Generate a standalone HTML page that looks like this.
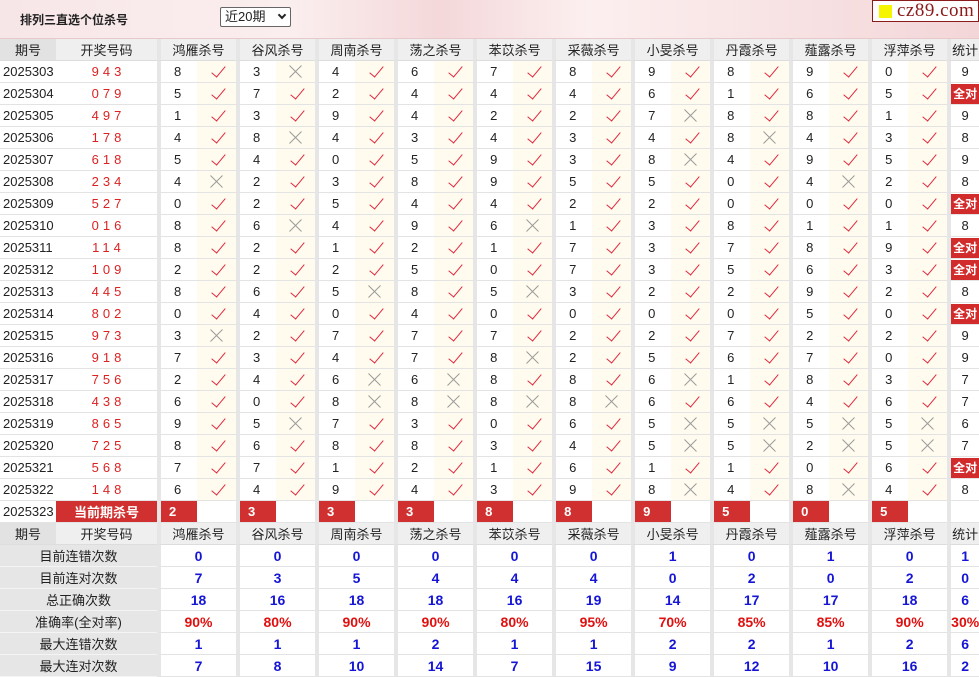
<!DOCTYPE html>
<html><head><meta charset="utf-8">
<style>
*{margin:0;padding:0;box-sizing:border-box}
body{width:979px;height:676px;overflow:hidden;background:#fff;font-family:"Liberation Sans","Noto Sans CJK SC",sans-serif;font-size:13px;color:#222}
.top{position:relative;height:39px;background:linear-gradient(90deg,#f7e6e8 0%,#fbeeee 30%,#f4d8da 45%,#fcefef 60%,#f3d6d8 100%);border-bottom:1px solid #e6c9cb}
.ttl{position:absolute;left:20px;top:11px;font-weight:bold;font-size:12px;color:#222}
.sel{position:absolute;left:220px;top:7px;width:71px;height:20px;border:1px solid #666;background:#fff;font-size:13px;padding-left:4px;line-height:18px;border-radius:2px}
.sel i{position:absolute;right:5px;top:4px;width:6px;height:6px;border-right:2px solid #222;border-bottom:2px solid #222;transform:rotate(45deg)}
.logo{position:absolute;left:872px;top:0;width:107px;height:22px;border:1px solid #8b1a1a;background:#fff;font-family:"Liberation Serif",serif;font-size:19px;color:#8b1a1a;line-height:20px;padding-left:24px;letter-spacing:0.5px}
.logo:before{content:"";position:absolute;left:6px;top:4px;width:13px;height:13px;background:#f5f500}
table{border-collapse:separate;border-spacing:0;table-layout:fixed;width:979px}
td{height:22px;border-bottom:1px solid #e3e3e3;text-align:center;white-space:nowrap;overflow:hidden;padding:0}
.p{text-align:left;padding-left:3px}
.d{color:#d22;letter-spacing:4px;padding-left:4px}
.n{border-left:4px solid #e6e6e6;text-align:left;padding-left:13px}
.y,.x{position:relative;background:#fffbef}
.y:after{content:"";position:absolute;left:18px;top:2px;width:6px;height:13px;border-right:1.6px solid #e2283c;border-bottom:1.6px solid #e2283c;transform:rotate(40deg)}
.x:before,.x:after{content:"";position:absolute;left:11px;top:10px;width:17px;height:1px;background:#9a9a9a;transform:rotate(45deg)}
.x:after{transform:rotate(-45deg)}
.t{border-left:4px solid #e6e6e6}
.q{display:inline-block;background:#d22b2b;color:#fff;font-weight:bold;width:28px;height:20px;line-height:20px;font-size:12px}
.h td{background:#efefef;border-bottom:1px solid #ddd}
.h td.g{border-left:4px solid #e6e6e6}
.h td.f{background:#e2e2e2}
.c td.r{background:#d0302f;color:#fff;font-weight:bold;text-align:left;padding-left:8px;border-left:4px solid #e6e6e6}
.c td.k{background:#d0302f;color:#fff;font-weight:bold}
.s td{background:#fff}
.s td.l{background:#e6e6e6;border-bottom:1px solid #f4f4f4}
.s td.v{border-left:4px solid #e6e6e6;color:#1515d6;font-weight:bold;font-size:14px}
.s td.rr{color:#e01010}
</style></head><body>
<div class="top"><div class="ttl">排列三直选个位杀号</div><div class="sel">近20期<i></i></div><div class="logo">cz89.com</div></div>
<table>
<colgroup><col style="width:56px"><col style="width:101px">
<col style="width:40px"><col style="width:39px"><col style="width:40px"><col style="width:39px"><col style="width:40px"><col style="width:39px"><col style="width:40px"><col style="width:39px"><col style="width:40px"><col style="width:39px"><col style="width:40px"><col style="width:39px"><col style="width:40px"><col style="width:39px"><col style="width:40px"><col style="width:39px"><col style="width:40px"><col style="width:39px"><col style="width:40px"><col style="width:39px">
<col style="width:32px"></colgroup>
<tr class="h"><td class="f">期号</td><td>开奖号码</td><td class="g" colspan="2">鸿雁杀号</td><td class="g" colspan="2">谷风杀号</td><td class="g" colspan="2">周南杀号</td><td class="g" colspan="2">荡之杀号</td><td class="g" colspan="2">苯苡杀号</td><td class="g" colspan="2">采薇杀号</td><td class="g" colspan="2">小旻杀号</td><td class="g" colspan="2">丹霞杀号</td><td class="g" colspan="2">薤露杀号</td><td class="g" colspan="2">浮萍杀号</td><td class="g">统计</td></tr>
<tr><td class="p">2025303</td><td class="d">943</td><td class="n">8</td><td class="y"></td><td class="n">3</td><td class="x"></td><td class="n">4</td><td class="y"></td><td class="n">6</td><td class="y"></td><td class="n">7</td><td class="y"></td><td class="n">8</td><td class="y"></td><td class="n">9</td><td class="y"></td><td class="n">8</td><td class="y"></td><td class="n">9</td><td class="y"></td><td class="n">0</td><td class="y"></td><td class="t">9</td></tr>
<tr><td class="p">2025304</td><td class="d">079</td><td class="n">5</td><td class="y"></td><td class="n">7</td><td class="y"></td><td class="n">2</td><td class="y"></td><td class="n">4</td><td class="y"></td><td class="n">4</td><td class="y"></td><td class="n">4</td><td class="y"></td><td class="n">6</td><td class="y"></td><td class="n">1</td><td class="y"></td><td class="n">6</td><td class="y"></td><td class="n">5</td><td class="y"></td><td class="t"><b class="q">全对</b></td></tr>
<tr><td class="p">2025305</td><td class="d">497</td><td class="n">1</td><td class="y"></td><td class="n">3</td><td class="y"></td><td class="n">9</td><td class="y"></td><td class="n">4</td><td class="y"></td><td class="n">2</td><td class="y"></td><td class="n">2</td><td class="y"></td><td class="n">7</td><td class="x"></td><td class="n">8</td><td class="y"></td><td class="n">8</td><td class="y"></td><td class="n">1</td><td class="y"></td><td class="t">9</td></tr>
<tr><td class="p">2025306</td><td class="d">178</td><td class="n">4</td><td class="y"></td><td class="n">8</td><td class="x"></td><td class="n">4</td><td class="y"></td><td class="n">3</td><td class="y"></td><td class="n">4</td><td class="y"></td><td class="n">3</td><td class="y"></td><td class="n">4</td><td class="y"></td><td class="n">8</td><td class="x"></td><td class="n">4</td><td class="y"></td><td class="n">3</td><td class="y"></td><td class="t">8</td></tr>
<tr><td class="p">2025307</td><td class="d">618</td><td class="n">5</td><td class="y"></td><td class="n">4</td><td class="y"></td><td class="n">0</td><td class="y"></td><td class="n">5</td><td class="y"></td><td class="n">9</td><td class="y"></td><td class="n">3</td><td class="y"></td><td class="n">8</td><td class="x"></td><td class="n">4</td><td class="y"></td><td class="n">9</td><td class="y"></td><td class="n">5</td><td class="y"></td><td class="t">9</td></tr>
<tr><td class="p">2025308</td><td class="d">234</td><td class="n">4</td><td class="x"></td><td class="n">2</td><td class="y"></td><td class="n">3</td><td class="y"></td><td class="n">8</td><td class="y"></td><td class="n">9</td><td class="y"></td><td class="n">5</td><td class="y"></td><td class="n">5</td><td class="y"></td><td class="n">0</td><td class="y"></td><td class="n">4</td><td class="x"></td><td class="n">2</td><td class="y"></td><td class="t">8</td></tr>
<tr><td class="p">2025309</td><td class="d">527</td><td class="n">0</td><td class="y"></td><td class="n">2</td><td class="y"></td><td class="n">5</td><td class="y"></td><td class="n">4</td><td class="y"></td><td class="n">4</td><td class="y"></td><td class="n">2</td><td class="y"></td><td class="n">2</td><td class="y"></td><td class="n">0</td><td class="y"></td><td class="n">0</td><td class="y"></td><td class="n">0</td><td class="y"></td><td class="t"><b class="q">全对</b></td></tr>
<tr><td class="p">2025310</td><td class="d">016</td><td class="n">8</td><td class="y"></td><td class="n">6</td><td class="x"></td><td class="n">4</td><td class="y"></td><td class="n">9</td><td class="y"></td><td class="n">6</td><td class="x"></td><td class="n">1</td><td class="y"></td><td class="n">3</td><td class="y"></td><td class="n">8</td><td class="y"></td><td class="n">1</td><td class="y"></td><td class="n">1</td><td class="y"></td><td class="t">8</td></tr>
<tr><td class="p">2025311</td><td class="d">114</td><td class="n">8</td><td class="y"></td><td class="n">2</td><td class="y"></td><td class="n">1</td><td class="y"></td><td class="n">2</td><td class="y"></td><td class="n">1</td><td class="y"></td><td class="n">7</td><td class="y"></td><td class="n">3</td><td class="y"></td><td class="n">7</td><td class="y"></td><td class="n">8</td><td class="y"></td><td class="n">9</td><td class="y"></td><td class="t"><b class="q">全对</b></td></tr>
<tr><td class="p">2025312</td><td class="d">109</td><td class="n">2</td><td class="y"></td><td class="n">2</td><td class="y"></td><td class="n">2</td><td class="y"></td><td class="n">5</td><td class="y"></td><td class="n">0</td><td class="y"></td><td class="n">7</td><td class="y"></td><td class="n">3</td><td class="y"></td><td class="n">5</td><td class="y"></td><td class="n">6</td><td class="y"></td><td class="n">3</td><td class="y"></td><td class="t"><b class="q">全对</b></td></tr>
<tr><td class="p">2025313</td><td class="d">445</td><td class="n">8</td><td class="y"></td><td class="n">6</td><td class="y"></td><td class="n">5</td><td class="x"></td><td class="n">8</td><td class="y"></td><td class="n">5</td><td class="x"></td><td class="n">3</td><td class="y"></td><td class="n">2</td><td class="y"></td><td class="n">2</td><td class="y"></td><td class="n">9</td><td class="y"></td><td class="n">2</td><td class="y"></td><td class="t">8</td></tr>
<tr><td class="p">2025314</td><td class="d">802</td><td class="n">0</td><td class="y"></td><td class="n">4</td><td class="y"></td><td class="n">0</td><td class="y"></td><td class="n">4</td><td class="y"></td><td class="n">0</td><td class="y"></td><td class="n">0</td><td class="y"></td><td class="n">0</td><td class="y"></td><td class="n">0</td><td class="y"></td><td class="n">5</td><td class="y"></td><td class="n">0</td><td class="y"></td><td class="t"><b class="q">全对</b></td></tr>
<tr><td class="p">2025315</td><td class="d">973</td><td class="n">3</td><td class="x"></td><td class="n">2</td><td class="y"></td><td class="n">7</td><td class="y"></td><td class="n">7</td><td class="y"></td><td class="n">7</td><td class="y"></td><td class="n">2</td><td class="y"></td><td class="n">2</td><td class="y"></td><td class="n">7</td><td class="y"></td><td class="n">2</td><td class="y"></td><td class="n">2</td><td class="y"></td><td class="t">9</td></tr>
<tr><td class="p">2025316</td><td class="d">918</td><td class="n">7</td><td class="y"></td><td class="n">3</td><td class="y"></td><td class="n">4</td><td class="y"></td><td class="n">7</td><td class="y"></td><td class="n">8</td><td class="x"></td><td class="n">2</td><td class="y"></td><td class="n">5</td><td class="y"></td><td class="n">6</td><td class="y"></td><td class="n">7</td><td class="y"></td><td class="n">0</td><td class="y"></td><td class="t">9</td></tr>
<tr><td class="p">2025317</td><td class="d">756</td><td class="n">2</td><td class="y"></td><td class="n">4</td><td class="y"></td><td class="n">6</td><td class="x"></td><td class="n">6</td><td class="x"></td><td class="n">8</td><td class="y"></td><td class="n">8</td><td class="y"></td><td class="n">6</td><td class="x"></td><td class="n">1</td><td class="y"></td><td class="n">8</td><td class="y"></td><td class="n">3</td><td class="y"></td><td class="t">7</td></tr>
<tr><td class="p">2025318</td><td class="d">438</td><td class="n">6</td><td class="y"></td><td class="n">0</td><td class="y"></td><td class="n">8</td><td class="x"></td><td class="n">8</td><td class="x"></td><td class="n">8</td><td class="x"></td><td class="n">8</td><td class="x"></td><td class="n">6</td><td class="y"></td><td class="n">6</td><td class="y"></td><td class="n">4</td><td class="y"></td><td class="n">6</td><td class="y"></td><td class="t">7</td></tr>
<tr><td class="p">2025319</td><td class="d">865</td><td class="n">9</td><td class="y"></td><td class="n">5</td><td class="x"></td><td class="n">7</td><td class="y"></td><td class="n">3</td><td class="y"></td><td class="n">0</td><td class="y"></td><td class="n">6</td><td class="y"></td><td class="n">5</td><td class="x"></td><td class="n">5</td><td class="x"></td><td class="n">5</td><td class="x"></td><td class="n">5</td><td class="x"></td><td class="t">6</td></tr>
<tr><td class="p">2025320</td><td class="d">725</td><td class="n">8</td><td class="y"></td><td class="n">6</td><td class="y"></td><td class="n">8</td><td class="y"></td><td class="n">8</td><td class="y"></td><td class="n">3</td><td class="y"></td><td class="n">4</td><td class="y"></td><td class="n">5</td><td class="x"></td><td class="n">5</td><td class="x"></td><td class="n">2</td><td class="x"></td><td class="n">5</td><td class="x"></td><td class="t">7</td></tr>
<tr><td class="p">2025321</td><td class="d">568</td><td class="n">7</td><td class="y"></td><td class="n">7</td><td class="y"></td><td class="n">1</td><td class="y"></td><td class="n">2</td><td class="y"></td><td class="n">1</td><td class="y"></td><td class="n">6</td><td class="y"></td><td class="n">1</td><td class="y"></td><td class="n">1</td><td class="y"></td><td class="n">0</td><td class="y"></td><td class="n">6</td><td class="y"></td><td class="t"><b class="q">全对</b></td></tr>
<tr><td class="p">2025322</td><td class="d">148</td><td class="n">6</td><td class="y"></td><td class="n">4</td><td class="y"></td><td class="n">9</td><td class="y"></td><td class="n">4</td><td class="y"></td><td class="n">3</td><td class="y"></td><td class="n">9</td><td class="y"></td><td class="n">8</td><td class="x"></td><td class="n">4</td><td class="y"></td><td class="n">8</td><td class="x"></td><td class="n">4</td><td class="y"></td><td class="t">8</td></tr>
<tr class="c"><td class="p">2025323</td><td class="k">当前期杀号</td><td class="r">2</td><td></td><td class="r">3</td><td></td><td class="r">3</td><td></td><td class="r">3</td><td></td><td class="r">8</td><td></td><td class="r">8</td><td></td><td class="r">9</td><td></td><td class="r">5</td><td></td><td class="r">0</td><td></td><td class="r">5</td><td></td><td class="t"></td></tr>
<tr class="h"><td class="f">期号</td><td>开奖号码</td><td class="g" colspan="2">鸿雁杀号</td><td class="g" colspan="2">谷风杀号</td><td class="g" colspan="2">周南杀号</td><td class="g" colspan="2">荡之杀号</td><td class="g" colspan="2">苯苡杀号</td><td class="g" colspan="2">采薇杀号</td><td class="g" colspan="2">小旻杀号</td><td class="g" colspan="2">丹霞杀号</td><td class="g" colspan="2">薤露杀号</td><td class="g" colspan="2">浮萍杀号</td><td class="g">统计</td></tr>
<tr class="s"><td class="l" colspan="2">目前连错次数</td><td class="v" colspan="2">0</td><td class="v" colspan="2">0</td><td class="v" colspan="2">0</td><td class="v" colspan="2">0</td><td class="v" colspan="2">0</td><td class="v" colspan="2">0</td><td class="v" colspan="2">1</td><td class="v" colspan="2">0</td><td class="v" colspan="2">1</td><td class="v" colspan="2">0</td><td class="v">1</td></tr>
<tr class="s"><td class="l" colspan="2">目前连对次数</td><td class="v" colspan="2">7</td><td class="v" colspan="2">3</td><td class="v" colspan="2">5</td><td class="v" colspan="2">4</td><td class="v" colspan="2">4</td><td class="v" colspan="2">4</td><td class="v" colspan="2">0</td><td class="v" colspan="2">2</td><td class="v" colspan="2">0</td><td class="v" colspan="2">2</td><td class="v">0</td></tr>
<tr class="s"><td class="l" colspan="2">总正确次数</td><td class="v" colspan="2">18</td><td class="v" colspan="2">16</td><td class="v" colspan="2">18</td><td class="v" colspan="2">18</td><td class="v" colspan="2">16</td><td class="v" colspan="2">19</td><td class="v" colspan="2">14</td><td class="v" colspan="2">17</td><td class="v" colspan="2">17</td><td class="v" colspan="2">18</td><td class="v">6</td></tr>
<tr class="s"><td class="l" colspan="2">准确率(全对率)</td><td class="v rr" colspan="2">90%</td><td class="v rr" colspan="2">80%</td><td class="v rr" colspan="2">90%</td><td class="v rr" colspan="2">90%</td><td class="v rr" colspan="2">80%</td><td class="v rr" colspan="2">95%</td><td class="v rr" colspan="2">70%</td><td class="v rr" colspan="2">85%</td><td class="v rr" colspan="2">85%</td><td class="v rr" colspan="2">90%</td><td class="v rr">30%</td></tr>
<tr class="s"><td class="l" colspan="2">最大连错次数</td><td class="v" colspan="2">1</td><td class="v" colspan="2">1</td><td class="v" colspan="2">1</td><td class="v" colspan="2">2</td><td class="v" colspan="2">1</td><td class="v" colspan="2">1</td><td class="v" colspan="2">2</td><td class="v" colspan="2">2</td><td class="v" colspan="2">1</td><td class="v" colspan="2">2</td><td class="v">6</td></tr>
<tr class="s"><td class="l" colspan="2">最大连对次数</td><td class="v" colspan="2">7</td><td class="v" colspan="2">8</td><td class="v" colspan="2">10</td><td class="v" colspan="2">14</td><td class="v" colspan="2">7</td><td class="v" colspan="2">15</td><td class="v" colspan="2">9</td><td class="v" colspan="2">12</td><td class="v" colspan="2">10</td><td class="v" colspan="2">16</td><td class="v">2</td></tr>
</table>
</body></html>
